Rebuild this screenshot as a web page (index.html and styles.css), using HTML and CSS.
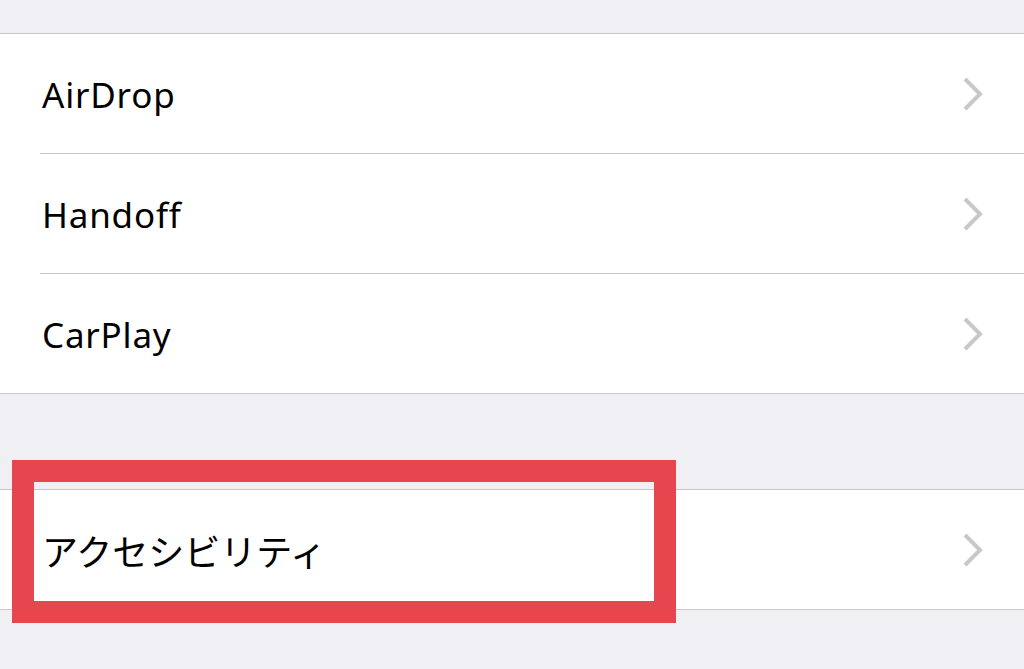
FILE: index.html
```html
<!DOCTYPE html>
<html lang="ja">
<head>
<meta charset="utf-8">
<link rel="stylesheet" href="styles.css">
</head>
<body>
<div class="page">
  <div class="group first">
    <div class="row"><span class="label">AirDrop</span><svg class="chev" viewBox="0 0 22 36"><polyline points="3,3 18,18 3,33"/></svg></div>
    <div class="row"><span class="label">Handoff</span><svg class="chev" viewBox="0 0 22 36"><polyline points="3,3 18,18 3,33"/></svg></div>
    <div class="row"><span class="label">CarPlay</span><svg class="chev" viewBox="0 0 22 36"><polyline points="3,3 18,18 3,33"/></svg></div>
  </div>
  <div class="group second">
    <div class="row"><span class="label jp">アクセシビリティ</span><svg class="chev" viewBox="0 0 22 36"><polyline points="3,3 18,18 3,33"/></svg></div>
    <div class="highlight"></div>
  </div>
</div>
</body>
</html>
```
FILE: styles.css
```css
html, body {
  margin: 0;
  padding: 0;
  background: #EFEFF4;
}
.page {
  width: 1024px;
  height: 669px;
  overflow: hidden;
  padding-top: 33px;
  box-sizing: border-box;
  font-family: "Noto Sans", "Noto Sans CJK JP", sans-serif;
  color: #000;
}
.group {
  position: relative;
  background: #fff;
  border-top: 1px solid #C8C7CC;
  border-bottom: 1px solid #C8C7CC;
}
.second {
  margin-top: 95px;
}
.row {
  position: relative;
  height: 119px;
  display: flex;
  align-items: center;
  justify-content: space-between;
  padding: 0 40px 0 42px;
}
.row + .row {
  border-top: 1px solid #C8C7CC;
  margin-left: 40px;
  padding-left: 2px;
}
.label {
  font-size: 35px;
  letter-spacing: 0.8px;
  padding-top: 2px;
}
.jp {
  font-family: "Noto Sans CJK JP", sans-serif;
  font-size: 36px;
  letter-spacing: 0;
  padding-top: 0;
}
.chev {
  width: 22px;
  height: 36px;
  fill: none;
  stroke: #C7C7CC;
  stroke-width: 4;
  stroke-linecap: butt;
  stroke-linejoin: miter;
}
.highlight {
  position: absolute;
  left: 12px;
  top: -30px;
  width: 664px;
  height: 163px;
  box-sizing: border-box;
  border: 22px solid #E8464E;
}
```
